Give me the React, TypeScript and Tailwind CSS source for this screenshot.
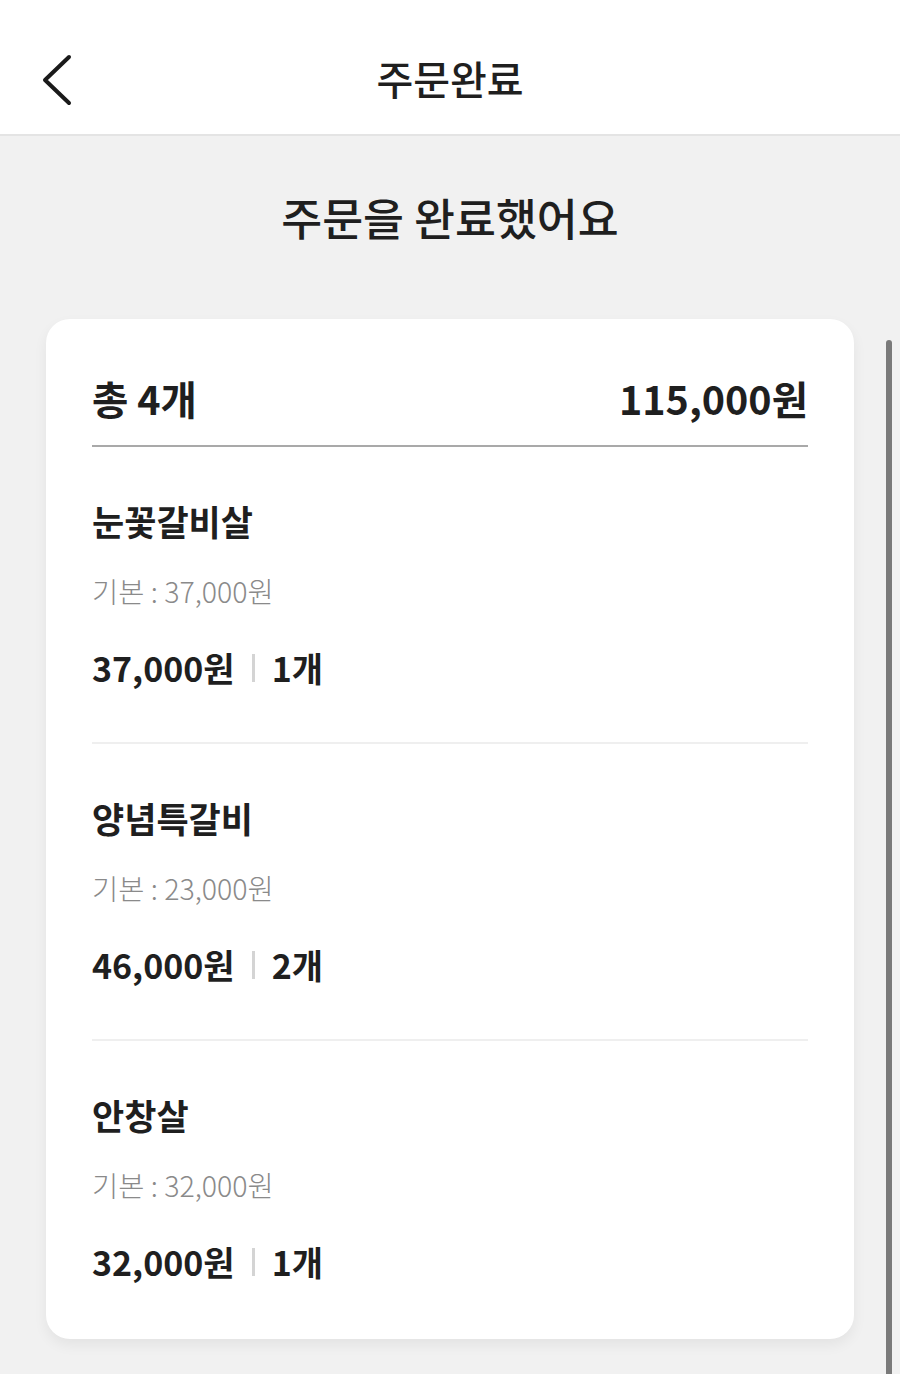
const items = [
  { name: '눈꽃갈비살', base: '37,000원', price: '37,000원', count: '1개' },
  { name: '양념특갈비', base: '23,000원', price: '46,000원', count: '2개' },
  { name: '안창살', base: '32,000원', price: '32,000원', count: '1개' },
];

const OrderItem: React.FC<{ name: string; base: string; price: string; count: string; last: boolean }> = ({
  name,
  base,
  price,
  count,
  last,
}) => {
  return (
    <div className={last ? 'pt-[49px] pb-[52px]' : 'pt-[49px] pb-[49px] border-b-2 border-[#efefef]'}>
      <div className="text-[35px] leading-[50px] font-bold text-[#1f1f1f]">{name}</div>
      <div className="mt-[25px] text-[28.5px] leading-[40px] font-light text-[#8a8a8a]">기본 : {base}</div>
      <div className="mt-[32px] flex items-center text-[34px] leading-[50px] font-bold text-[#1f1f1f]">
        <span>{price}</span>
        <span className="mx-[17px] w-[3px] h-[28px] bg-[#d4d4d4]" />
        <span>{count}</span>
      </div>
    </div>
  );
};

const App: React.FC = () => {
  return (
    <div
      className="relative min-h-screen bg-[#f1f1f1] overflow-hidden"
      style={{ fontFamily: '"Noto Sans CJK KR", "Noto Sans", sans-serif' }}
    >
      {/* 헤더 */}
      <header className="h-[136px] pt-[22px] bg-white border-b-2 border-[#e4e4e4] flex items-center justify-center relative">
        <button type="button" aria-label="뒤로가기" className="absolute left-[40px] top-[54px]">
          <svg width="34" height="52" viewBox="0 0 34 52" fill="none">
            <polyline
              points="29,3 5,26 29,49"
              stroke="#1a1a1a"
              strokeWidth="4"
              strokeLinecap="round"
              strokeLinejoin="round"
            />
          </svg>
        </button>
        <h1 className="text-[40px] font-medium text-[#1f1f1f] leading-none">주문완료</h1>
      </header>

      <div className="h-[164px] flex items-center justify-center pb-[2px]">
        <h2 className="text-[44.5px] font-medium text-[#1f1f1f] leading-none">주문을 완료했어요</h2>
      </div>

      {/* 주문 카드 */}
      <div className="mx-[46px] mt-[19px] bg-white rounded-[24px] px-[46px] shadow-[0_6px_14px_rgba(0,0,0,0.06)]">
        <div className="pt-[49px] pb-[17px] border-b-2 border-[#a9a9a9] flex items-center justify-between text-[39.5px] leading-[60px] font-bold text-[#1f1f1f]">
          <span>총 4개</span>
          <span>115,000원</span>
        </div>
        {items.map((item, i) => (
          <OrderItem key={item.name} {...item} last={i === items.length - 1} />
        ))}
      </div>

      {/* 스크롤바 */}
      <div className="absolute right-[8px] top-[340px] w-[6px] h-[1100px] rounded-t-full bg-[#7a7a7a]" />
    </div>
  );
};

export default App;
